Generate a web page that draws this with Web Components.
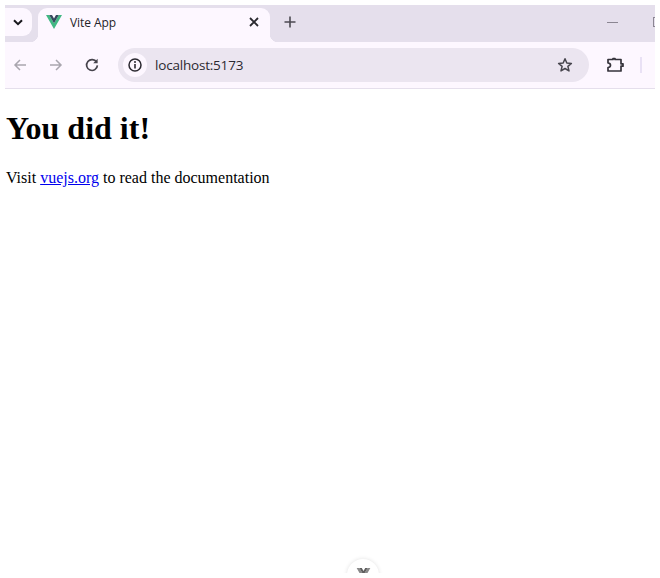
<!doctype html>
<html><head><meta charset="utf-8"><title>Vite App</title>
<style>html,body{margin:0;background:#fff}body{height:578px;overflow:hidden}</style>
</head><body>
<browser-window>
  <tab-strip title-text="Vite App"></tab-strip>
  <tool-bar url="localhost:5173"></tool-bar>
  <page-view>
    <h1 style="margin:21.44px 0;font-size:32px;line-height:37px;font-weight:bold">You did it!</h1>
    <p style="margin:0;line-height:18px;font-size:16px">Visit <a href="#" style="color:#00e">vuejs.org</a> to read the documentation</p>
  </page-view>
  <dev-toggle></dev-toggle>
</browser-window>
<script>
const vue=`<svg width="16" height="14" viewBox="0 0 16 14"><path d="M0 0H3.200L8 8.300 12.800 0H16L8 14Z" fill="#41b883"/><path d="M3.200 0H6L8 3.500 10 0H12.800L8 8.300Z" fill="#35495e"/></svg>`;
function def(n,css,html){customElements.define(n,class extends HTMLElement{connectedCallback(){if(this.shadowRoot)return;const s=this.attachShadow({mode:'open'});s.innerHTML=`<style>${css}</style>`+(typeof html==='function'?html(this):html);}})}
def('browser-window',`:host{position:relative;display:flex;flex-direction:column;margin:5px 5px 0;width:650px;height:568px;overflow:hidden}`,`<slot></slot>`);
def('tab-strip',`:host{display:flex;height:37px;background:#e5dfec;padding-top:3px;box-sizing:border-box;flex:none;font:12px "Open Sans","Noto Sans",sans-serif;color:#242329}
.drop{width:27px;height:28px;background:#fdf7ff;border-radius:0 9px 9px 0;display:flex;align-items:center;justify-content:center;margin-right:6px;flex:none;box-sizing:border-box;padding-right:2px}
.tab{position:relative;width:232px;height:34px;background:#fdf7ff;border-radius:9px 9px 0 0;display:flex;align-items:center;box-sizing:border-box;padding:0 11px 6px 8px;flex:none}
.tab::after{content:"";position:absolute;right:-8px;bottom:0;width:8px;height:8px;background:radial-gradient(circle at 100% 0,transparent 8px,#fdf7ff 8.5px)}
.tab::before{content:"";position:absolute;left:-8px;bottom:0;width:8px;height:8px;background:radial-gradient(circle at 0 0,transparent 8px,#fdf7ff 8.5px)}
.title{margin-left:8px;flex:1;letter-spacing:-.08px}
.plus{margin:0 0 6px 14px;height:28px;display:flex;align-items:center;flex:none}
.sp{flex:1}
.ctl{display:flex;align-items:center;height:28px;flex:none}
.max{width:10px;height:10px;border:1px solid #8b8692;box-sizing:border-box;margin-left:35px;margin-right:-8px;flex:none}`,
t=>`<div class="drop"><svg width="10" height="7" viewBox="0 0 10 7"><path d="M1 1.200 5 5.200 9 1.200" fill="none" stroke="#18171c" stroke-width="2"/></svg></div>
<div class="tab">${vue}<span class="title">${t.getAttribute('title-text')}</span><svg width="10" height="10" viewBox="0 0 10 10"><path d="M1 1 9 9M9 1 1 9" stroke="#2a292f" stroke-width="1.800"/></svg></div>
<div class="plus"><svg width="12" height="12" viewBox="0 0 12 12"><path d="M6 .5V11.500M.5 6H11.500" stroke="#4c4a52" stroke-width="1.600"/></svg></div>
<div class="sp"></div>
<div class="ctl"><svg width="11" height="1" viewBox="0 0 11 1"><path d="M0 .5H11" stroke="#8b8692"/></svg><div class="max"></div></div>`);
def('tool-bar',`:host{display:flex;align-items:center;height:47px;box-sizing:border-box;background:#fdf7ff;border-bottom:1px solid #e5dfec;padding:0 0 1px 7px;flex:none;color:#46444c}
.b{width:16px;height:16px;display:flex;flex:none}
.omni{width:471px;height:34px;background:#ebe5f0;border-radius:17px;display:flex;align-items:center;box-sizing:border-box;padding:0 16px 0 5px;margin:0 17px 0 18px;flex:none}
.info{width:24px;height:24px;border-radius:50%;background:#fdf7ff;display:flex;align-items:center;justify-content:center;flex:none}
.url{margin-left:8px;flex:1;font:13.5px "Open Sans","Noto Sans",sans-serif;color:#2b2930;letter-spacing:-.2px}
.div{width:2px;height:16px;background:#e9e1f5;margin-left:16px;flex:none}`,
t=>`<div class="b"><svg width="16" height="16" viewBox="0 0 16 16"><path d="M14 8H3M8 3 3 8 8 13" fill="none" stroke="#a9a6ae" stroke-width="1.500"/></svg></div>
<div class="b" style="margin-left:20px"><svg width="16" height="16" viewBox="0 0 16 16"><path d="M2 8H13M8 3 13 8 8 13" fill="none" stroke="#a9a6ae" stroke-width="1.500"/></svg></div>
<div class="b" style="margin-left:20px"><svg width="16" height="16" viewBox="0 0 16 16"><path d="M12.600 5.200A5.400 5.400 0 1 0 13.400 8.400" fill="none" stroke="#46444c" stroke-width="1.700"/><path d="M13.600 1.800V6.200H9.200Z" fill="#46444c"/></svg></div>
<div class="omni"><div class="info"><svg width="14" height="14" viewBox="0 0 14 14"><circle cx="7" cy="7" r="6" fill="none" stroke="#2b2930" stroke-width="1.500"/><path d="M7 6V10.500" stroke="#2b2930" stroke-width="1.600"/><circle cx="7" cy="4.100" r="1" fill="#2b2930"/></svg></div>
<span class="url">${t.getAttribute('url')}</span>
<svg width="16" height="16" viewBox="0 0 16 16"><path d="M8 1.800 9.800 6 14.400 6.400 10.900 9.400 12 13.900 8 11.500 4 13.900 5.100 9.400 1.600 6.400 6.200 6Z" fill="none" stroke="#46444c" stroke-width="1.500" stroke-linejoin="round"/></svg></div>
<div class="b" style="width:18px;height:18px"><svg width="18" height="18" viewBox="0 0 18 18"><path d="M2 3.500H7V2.600H9V3.500H15V7.800H17V10.200H15V15H2V11.500Q4.500 11.500 4.500 9.300T2 7Z" fill="none" stroke="#35333b" stroke-width="1.700" stroke-linejoin="round"/></svg></div>
<div class="div"></div>`);
def('page-view',`:host{display:block;flex:1;padding:0 0 0 1px;background:#fff;color:#000;font-family:"Liberation Serif",serif;overflow:hidden}`,`<slot></slot>`);
def('dev-toggle',`:host{position:absolute;left:342px;top:554px;width:32px;height:32px;border-radius:50%;background:#fff;box-shadow:0 0 4px rgba(0,0,0,.12);display:flex;justify-content:center;padding-top:9px;box-sizing:border-box}`,
`<svg width="15" height="12" viewBox="0 0 16 14"><path d="M0 0H3.200L8 8.300 12.800 0H16L8 14Z" fill="#8a8a8a"/><path d="M3.200 0H6L8 3.500 10 0H12.800L8 8.300Z" fill="#5f5f5f"/></svg>`);
</script>
</body></html>
